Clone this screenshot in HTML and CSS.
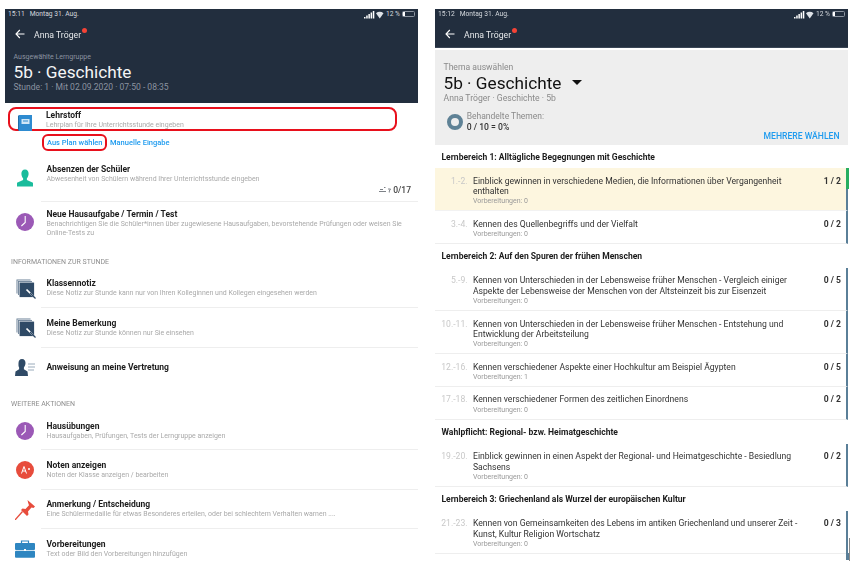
FILE: index.html
```html
<!DOCTYPE html>
<html lang="de">
<head>
<meta charset="utf-8">
<title>Lehrstoff</title>
<link rel="stylesheet" href="styles.css">
</head>
<body>
<svg class="defs" width="0" height="0" aria-hidden="true">
  <symbol id="i-clock" viewBox="0 0 18 18"><circle cx="9" cy="9" r="9" fill="#9b59b6"/><path d="M9.200 3v6.400L5.400 13" fill="none" stroke="#fff" stroke-width="1.100"/></symbol>
  <symbol id="i-note" viewBox="0 0 20 20"><rect x="0.500" y="0.500" width="14" height="14" fill="#6d8297"/><rect x="1.400" y="1.400" width="14" height="14" fill="#e9edf1"/><rect x="2" y="2" width="14" height="14" fill="#6d8297"/><rect x="2.900" y="2.900" width="14" height="14" fill="#e9edf1"/><rect x="3.600" y="3.600" width="14.500" height="14.500" fill="#2f4a66"/><path d="M10.500 10.500l6.500 6.500" stroke="#fff" stroke-width="1.700"/><path d="M14 14l5.500 5.500" stroke="#2f4a66" stroke-width="1.200"/></symbol>
  <symbol id="i-back" viewBox="0 0 10 10"><path d="M9.500 5H1M4.800 1L1 5l3.800 4" fill="none" stroke="#fff" stroke-width="1.100"/></symbol>
  <symbol id="i-status" viewBox="0 0 20 9"><path d="M0 7h1.500v1.500H0zM2.200 5.500h1.500v3H2.200zM4.400 4h1.500v4.500H4.400zM6.600 2.500h1.500v6H6.600zM8.800 1h1.500v7.500H8.800z" fill="#fff"/><path d="M12 3.200a5.500 5.500 0 0 1 7.500 0l-3.750 5.300z" fill="#dfe3e8"/></symbol>
</svg>
<main class="screens">
  <section class="panel panel-left">
    <header class="bar bar-tall">
      <div class="status"><span>15:11&nbsp;&nbsp; Montag 31. Aug.</span><span class="status-right"><svg class="signal" viewBox="0 0 20 9"><use href="#i-status"/></svg><span>12 %</span><span class="battery"><span class="battery-level"></span></span></span></div>
      <div class="nav"><svg class="back" viewBox="0 0 10 10"><use href="#i-back"/></svg><span class="nav-name">Anna Tröger</span><span class="dot"></span></div>
      <div class="hero">
        <div class="hero-label">Ausgewählte Lerngruppe</div>
        <div class="hero-title">5b · Geschichte</div>
        <div class="hero-sub">Stunde: 1 · Mit 02.09.2020 · 07:50 - 08:35</div>
      </div>
    </header>

    <div class="marked-row">
      <svg class="icon icon-book" viewBox="0 0 14 16"><rect x="1" y="0" width="13" height="16" fill="#2e8bd0"/><rect y="0.500" width="1" height="15" fill="#1f6ea8"/><rect x="3.500" y="4" width="8" height="5" fill="#cfe6f7"/><rect x="5" y="5.500" width="5" height="1" fill="#2e8bd0"/></svg>
      <div class="marked-text">
        <div class="title">Lehrstoff</div>
        <div class="sub">Lehrplan für Ihre Unterrichtsstunde eingeben</div>
      </div>
    </div>
    <div class="links">
      <a class="link link-marked">Aus Plan wählen</a>
      <a class="link">Manuelle Eingabe</a>
    </div>

    <div class="row">
      <svg class="icon icon-person" viewBox="0 0 16 17"><path d="M8 0c2.400 0 3.600 1.800 3.600 4.200 0 1.900-.8 3.500-1.700 4.600v1.600L16 13.200V17H0v-3.800l6.100-2.800V8.800C5.200 7.700 4.400 6.100 4.400 4.200 4.400 1.800 5.600 0 8 0z" fill="#1abc9c"/></svg>
      <div class="row-body row-absent">
        <div class="title">Absenzen der Schüler</div>
        <div class="sub">Abwesenheit von Schülern während Ihrer Unterrichtsstunde eingeben</div>
        <div class="absent-count"><svg class="absent-icon" viewBox="0 0 12 7"><path d="M1 3.500h3M0 5.500h7M5 1.500h1.500M9 3h2.500l-1.200 2v1.500" fill="none" stroke="#6f747b" stroke-width="0.900"/></svg><span>0/17</span></div>
      </div>
    </div>
    <div class="row">
      <svg class="icon icon-round" viewBox="0 0 18 18"><use href="#i-clock"/></svg>
      <div class="row-body row-homework">
        <div class="title">Neue Hausaufgabe / Termin / Test</div>
        <div class="sub sub-wrap">Benachrichtigen Sie die Schüler*innen über zugewiesene Hausaufgaben, bevorstehende Prüfungen oder weisen Sie Online-Tests zu</div>
      </div>
    </div>

    <h2 class="section section-info">INFORMATIONEN ZUR STUNDE</h2>
    <div class="row">
      <svg class="icon icon-note" viewBox="0 0 20 20"><use href="#i-note"/></svg>
      <div class="row-body">
        <div class="title">Klassennotiz</div>
        <div class="sub">Diese Notiz zur Stunde kann nur von Ihren Kolleginnen und Kollegen eingesehen werden</div>
      </div>
    </div>
    <div class="row">
      <svg class="icon icon-note" viewBox="0 0 20 20"><use href="#i-note"/></svg>
      <div class="row-body">
        <div class="title">Meine Bemerkung</div>
        <div class="sub">Diese Notiz zur Stunde können nur Sie einsehen</div>
      </div>
    </div>
    <div class="row">
      <svg class="icon icon-sub" viewBox="0 0 20 17"><path d="M7 0c2.400 0 3.500 1.800 3.500 4 0 1.900-.8 3.400-1.600 4.500v1.700l3.600 2.300.5 4.500H0l.5-4.500 3.600-2.300V8.500C3.300 7.400 3.500 5.900 3.500 4 3.500 1.800 4.600 0 7 0z" fill="#2f4a66"/><path d="M13 5h7M13 8h7M13 11h6" stroke="#8fa1b3" stroke-width="0.900"/></svg>
      <div class="row-body row-plain">
        <div class="title">Anweisung an meine Vertretung</div>
      </div>
    </div>

    <h2 class="section section-more">WEITERE AKTIONEN</h2>
    <div class="row">
      <svg class="icon icon-round" viewBox="0 0 18 18"><use href="#i-clock"/></svg>
      <div class="row-body">
        <div class="title">Hausübungen</div>
        <div class="sub">Hausaufgaben, Prüfungen, Tests der Lerngruppe anzeigen</div>
      </div>
    </div>
    <div class="row">
      <svg class="icon icon-round" viewBox="0 0 18 18"><circle cx="9" cy="9" r="9" fill="#e74c3c"/><path d="M5.500 12.500L8 5.500l2.500 7M6.500 10h3.500" fill="none" stroke="#fff" stroke-width="1"/><circle cx="13" cy="8" r="1" fill="#fff"/></svg>
      <div class="row-body">
        <div class="title">Noten anzeigen</div>
        <div class="sub">Noten der Klasse anzeigen / bearbeiten</div>
      </div>
    </div>
    <div class="row">
      <svg class="icon icon-pin" viewBox="0 0 20 20"><path d="M12.500 0L20 6.500l-1.500 1.500-2-.5-3.500 4 .5 3-1.500 1.500-6-6 1.500-1.500 3 .5 3.500-3.800-.8-2.200z" fill="#e74c3c"/><path d="M7.500 11.500L0 20" stroke="#e74c3c" stroke-width="1.300"/></svg>
      <div class="row-body">
        <div class="title">Anmerkung / Entscheidung</div>
        <div class="sub">Eine Schülermedaille für etwas Besonderes erteilen, oder bei schlechtem Verhalten warnen ....</div>
      </div>
    </div>
    <div class="row row-last">
      <svg class="icon icon-case" viewBox="0 0 20 18"><path d="M6.500 3V1h7v2" fill="none" stroke="#2e86c1" stroke-width="1.200"/><rect y="3" width="20" height="7" rx="1" fill="#2e86c1"/><rect y="10.800" width="20" height="7" rx="1" fill="#2e86c1"/><rect x="9" y="9" width="2" height="2" fill="#fff"/></svg>
      <div class="row-body">
        <div class="title">Vorbereitungen</div>
        <div class="sub">Text oder Bild den Vorbereitungen hinzufügen</div>
      </div>
    </div>
  </section>

  <section class="panel panel-right">
    <header class="bar bar-short">
      <div class="status"><span>15:12&nbsp;&nbsp; Montag 31. Aug.</span><span class="status-right"><svg class="signal" viewBox="0 0 20 9"><use href="#i-status"/></svg><span>12 %</span><span class="battery"><span class="battery-level"></span></span></span></div>
      <div class="nav"><svg class="back" viewBox="0 0 10 10"><use href="#i-back"/></svg><span class="nav-name">Anna Tröger</span><span class="dot"></span></div>
    </header>
    <div class="topic">
      <div class="topic-label">Thema auswählen</div>
      <div class="topic-title">5b · Geschichte <span class="caret"></span></div>
      <div class="topic-sub">Anna Tröger · Geschichte · 5b</div>
      <div class="progress">
        <span class="ring"></span>
        <div class="progress-text">
          <div class="progress-label">Behandelte Themen:</div>
          <div class="progress-value">0 / 10 = 0%</div>
        </div>
      </div>
      <a class="more">MEHRERE WÄHLEN</a>
    </div>

    <h3 class="group group-first">Lernbereich 1: Alltägliche Begegnungen mit Geschichte</h3>
    <div class="topic-row topic-row-active"><span class="num">1.-2.</span><div class="topic-main"><div class="topic-name">Einblick gewinnen in verschiedene Medien, die Informationen über Vergangenheit enthalten</div><div class="prep">Vorbereitungen: 0</div></div><span class="count">1 / 2</span></div>
    <div class="topic-row"><span class="num">3.-4.</span><div class="topic-main"><div class="topic-name">Kennen des Quellenbegriffs und der Vielfalt</div><div class="prep">Vorbereitungen: 0</div></div><span class="count">0 / 2</span></div>

    <h3 class="group">Lernbereich 2: Auf den Spuren der frühen Menschen</h3>
    <div class="topic-row"><span class="num">5.-9.</span><div class="topic-main"><div class="topic-name">Kennen von Unterschieden in der Lebensweise früher Menschen - Vergleich einiger Aspekte der Lebensweise der Menschen von der Altsteinzeit bis zur Eisenzeit</div><div class="prep">Vorbereitungen: 0</div></div><span class="count">0 / 5</span></div>
    <div class="topic-row"><span class="num">10.-11.</span><div class="topic-main"><div class="topic-name">Kennen von Unterschieden in der Lebensweise früher Menschen - Entstehung und Entwicklung der Arbeitsteilung</div><div class="prep">Vorbereitungen: 0</div></div><span class="count">0 / 2</span></div>
    <div class="topic-row"><span class="num">12.-16.</span><div class="topic-main"><div class="topic-name">Kennen verschiedener Aspekte einer Hochkultur am Beispiel Ägypten</div><div class="prep">Vorbereitungen: 1</div></div><span class="count">0 / 5</span></div>
    <div class="topic-row"><span class="num">17.-18.</span><div class="topic-main"><div class="topic-name">Kennen verschiedener Formen des zeitlichen Einordnens</div><div class="prep">Vorbereitungen: 0</div></div><span class="count">0 / 2</span></div>

    <h3 class="group">Wahlpflicht: Regional- bzw. Heimatgeschichte</h3>
    <div class="topic-row"><span class="num">19.-20.</span><div class="topic-main"><div class="topic-name">Einblick gewinnen in einen Aspekt der Regional- und Heimatgeschichte - Besiedlung Sachsens</div><div class="prep">Vorbereitungen: 0</div></div><span class="count">0 / 2</span></div>

    <h3 class="group">Lernbereich 3: Griechenland als Wurzel der europäischen Kultur</h3>
    <div class="topic-row topic-row-last"><span class="num">21.-23.</span><div class="topic-main"><div class="topic-name">Kennen von Gemeinsamkeiten des Lebens im antiken Griechenland und unserer Zeit - Kunst, Kultur Religion Wortschatz</div><div class="prep">Vorbereitungen: 0</div></div><span class="count">0 / 3</span><span class="scroll"></span></div>
  </section>
</main>
</body>
</html>
```

FILE: styles.css
```css
* { box-sizing: border-box; }
html, body { margin: 0; padding: 0; }
body {
  width: 857px;
  height: 571px;
  overflow: hidden;
  background: #fff;
  font-family: Roboto, "Liberation Sans", sans-serif;
  color: #1a1a1a;
}
.defs { position: absolute; }
.screens {
  display: flex;
  gap: 17px;
  padding: 9px 0 0 5px;
  filter: blur(0.35px);
}
.panel { width: 413px; flex: none; }

/* top bars */
.bar { background: #222e3e; color: #fff; }
.bar-tall { height: 94px; }
.bar-short { height: 39px; border-bottom: 1px solid #3a4656; }
.status {
  display: flex;
  justify-content: space-between;
  align-items: center;
  height: 10px;
  padding: 0 3px;
  font-size: 6.700px;
  color: #d5d9de;
}
.status-right { display: flex; align-items: center; gap: 2px; }
.signal { width: 20px; height: 9px; }
.battery {
  display: block;
  width: 13px;
  height: 6px;
  border: 1px solid #8d95a0;
  border-radius: 1.500px;
}
.battery-level { display: block; width: 2px; height: 4px; background: #fff; }
.nav {
  display: flex;
  align-items: center;
  height: 25px;
  padding: 5px 0 0 10px;
  font-size: 8.700px;
  color: #e6e8eb;
}
.back { width: 10px; height: 10px; margin-right: 9px; }
.nav-name { position: relative; top: 0.500px; }
.dot {
  width: 5px;
  height: 5px;
  margin: -8px 0 0 1px;
  border-radius: 50%;
  background: #f44336;
}
.hero { padding: 9px 0 0 8.500px; }
.hero-label { font-size: 7px; line-height: 9px; color: #8b93a0; }
.hero-title { font-size: 17.200px; line-height: 20px; color: #f4f5f6; }
.hero-sub { font-size: 8.550px; line-height: 11px; color: #8b93a0; }

/* left panel rows */
.marked-row {
  display: flex;
  width: 389px;
  height: 24px;
  margin: 4px 0 0 3px;
  border: 2px solid #e8101c;
  border-radius: 8px;
}
.marked-text { margin-left: 14px; padding-top: 0.500px; }
.icon-book {
  width: 14px;
  height: 16px;
  margin: 6px 0 0 8px;
}
.links {
  display: flex;
  align-items: center;
  gap: 3px;
  height: 27px;
  padding: 0 0 4px 37px;
  font-size: 7.500px;
  font-weight: 500;
  color: #1e9bef;
}
.link-marked {
  padding: 2px 2.500px 2px 3px;
  border: 2px solid #e8101c;
  border-radius: 6px;
}
.row { display: flex; position: relative; }
.icon { flex: none; }
.row-body {
  flex: 1;
  min-width: 0;
  margin-left: 36px;
  padding: 9.500px 0 8.200px 5.500px;
  border-bottom: 1px solid #eeeeee;
}
.row > .icon { position: absolute; left: 11px; top: 11px; }
.row-last .row-body { border-bottom: 0; }
.row-body.row-absent { padding: 5.500px 0 6.800px 5.500px; }
.row-body.row-homework { padding: 6.500px 0 0 5.500px; border-bottom: 0; }
.row-body.row-plain { padding: 13.900px 0 16px 5.500px; border-bottom: 0; }
.title {
  font-size: 8.500px;
  line-height: 11px;
  font-weight: 700;
  color: #1c1c1c;
}
.sub {
  font-size: 6.970px;
  line-height: 9.700px;
  color: #a9a9a9;
}
.sub-wrap { line-height: 9.300px; }
.absent-count {
  display: flex;
  justify-content: flex-end;
  align-items: center;
  gap: 2px;
  height: 9px;
  margin-top: 1px;
  padding-right: 7px;
  font-size: 8.500px;
  font-weight: 500;
  color: #444;
}
.absent-icon { width: 12px; height: 7px; }
.icon-person { width: 16px; height: 18px; }
.row > .icon-person { left: 12px; top: 11px; }
.icon-round { width: 18px; height: 18px; }
.icon-note { width: 20px; height: 20px; }
.row > .icon-note { left: 10.500px; top: 10px; }
.icon-sub { width: 20px; height: 17px; }
.row > .icon-sub { left: 10px; top: 11.500px; }
.icon-pin { width: 20px; height: 20px; }
.row > .icon-pin { left: 10px; top: 10px; }
.icon-case { width: 20px; height: 18px; }
.row > .icon-case { left: 10px; top: 11px; }
.section {
  margin: 0;
  padding-left: 6px;
  font-size: 7px;
  line-height: 10px;
  font-weight: 400;
  color: #8e8e8e;
}
.section-info { padding-top: 18.900px; padding-bottom: 2px; }
.section-more { padding-top: 10.400px; padding-bottom: 2px; }

/* right panel */
.topic {
  position: relative;
  height: 95px;
  margin-top: 2px;
  padding: 11.500px 0 0 8.500px;
  background: #eeeeee;
}
.topic-label { font-size: 8.600px; line-height: 11px; color: #8a8a8a; }
.topic-title {
  display: flex;
  align-items: center;
  gap: 10.500px;
  font-size: 17.200px;
  line-height: 20px;
  color: #111;
}
.caret {
  width: 0;
  height: 0;
  border-left: 5px solid transparent;
  border-right: 5px solid transparent;
  border-top: 5.500px solid #111;
}
.topic-sub { font-size: 8.650px; line-height: 10px; color: #8a8a8a; }
.progress { display: flex; align-items: center; gap: 3.700px; margin: 8px 0 0 3.500px; }
.ring {
  width: 16px;
  height: 16px;
  border: 4px solid #5f8296;
  border-radius: 50%;
}
.progress-label { font-size: 8.500px; line-height: 11px; color: #8a8a8a; }
.progress-value { font-size: 8.600px; line-height: 11px; font-weight: 500; color: #333; }
.more {
  position: absolute;
  right: 8.500px;
  bottom: 4px;
  font-size: 8.600px;
  font-weight: 500;
  color: #1e9bef;
}
.group {
  margin: 0;
  height: 24px;
  padding: 7px 0 0 6.500px;
  font-size: 8.550px;
  line-height: 10px;
  font-weight: 700;
  color: #1c1c1c;
}
.group-first { height: 23px; }
.topic-row {
  position: relative;
  display: flex;
  align-items: flex-start;
  padding: 7.500px 0 4.100px 0;
  border-right: 2.500px solid #5a7f98;
  border-bottom: 1px solid #eeeeee;
  font-size: 8.600px;
  line-height: 10.250px;
}
.topic-row-active {
  background: #fdf6df;
  border-bottom-color: #f2f2f2;
}
.topic-row-active::before {
  content: "";
  position: absolute;
  top: 0;
  right: -2.500px;
  width: 2.500px;
  height: 21px;
  background: #27ae60;
}
.num {
  flex: none;
  width: 32.500px;
  text-align: right;
  color: #c8c8c8;
}
.topic-main { flex: 1; min-width: 0; padding-left: 5.500px; }
.topic-name { max-width: 330px; color: #333; }
.prep { font-size: 7px; line-height: 10px; color: #999; }
.count {
  flex: none;
  width: 30px;
  padding-right: 5px;
  text-align: right;
  font-weight: 700;
  color: #333;
}
.topic-row-last::after {
  content: "";
  position: absolute;
  right: -2.500px;
  top: 100%;
  width: 2.500px;
  height: 6.600px;
  background: #5a7f98;
}
.scroll {
  position: absolute;
  right: -3.500px;
  top: 27px;
  width: 1px;
  height: 23px;
  background: #888;
}
```
